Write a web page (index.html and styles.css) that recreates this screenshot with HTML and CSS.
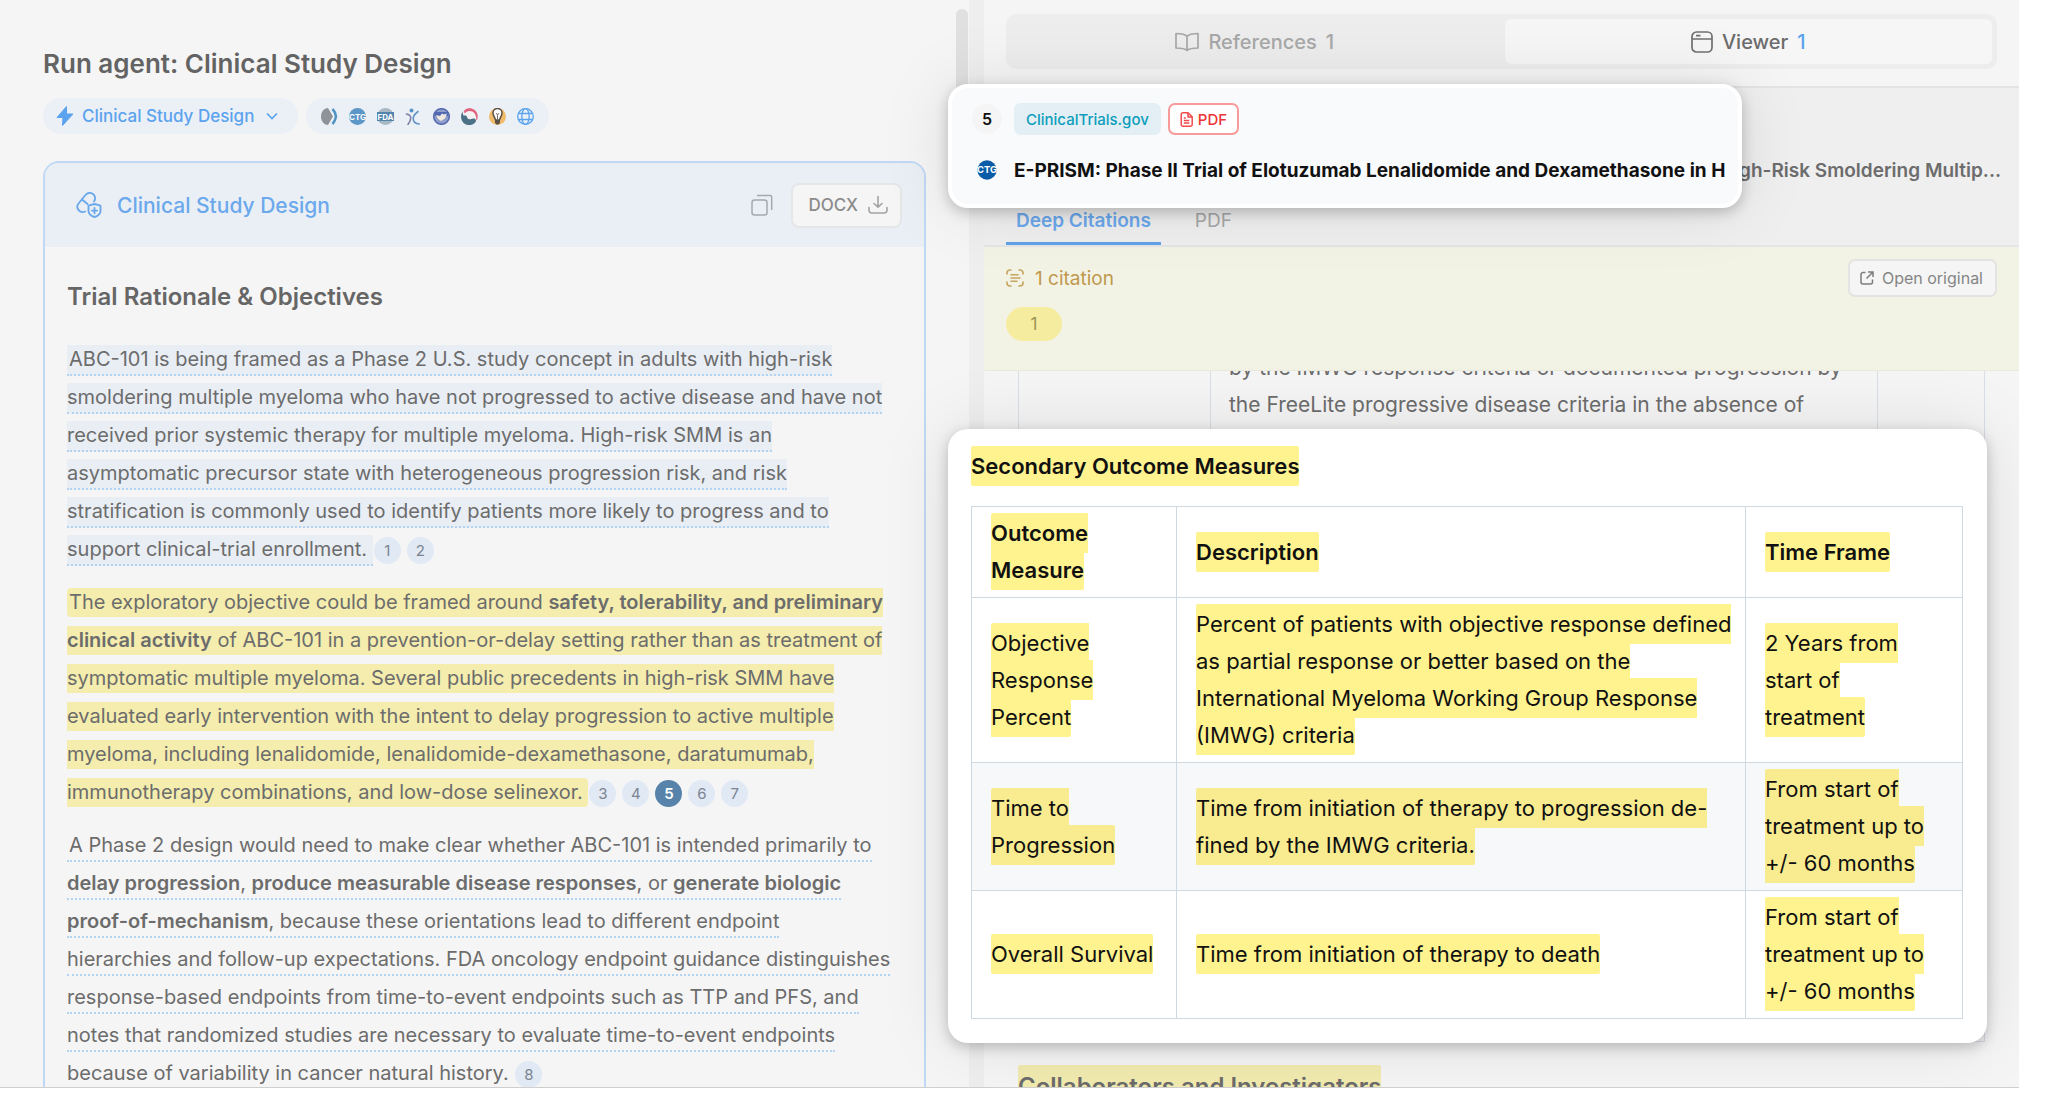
FILE: index.html
```html
<!DOCTYPE html>
<html lang="en">
  <head>
    <meta charset="UTF-8" />
    <meta name="viewport" content="width=device-width, initial-scale=1.0" />
    <title>Clinical Study Design</title>
    <link rel="stylesheet" href="styles.css">
  </head>
  <body>
    <div class="app">
      <main class="agent">
        <div class="scrollbar"></div>
        <h1>Run agent: Clinical Study Design</h1>
        <div class="pills">
          <button class="pill pill-agent">
            <svg width="18" height="20" viewBox="0 0 18 20"><path d="M10.5 0.5 1 11.5h6L6.500 19.500 17 8h-6.500z" fill="#5ba3ee" stroke="#5ba3ee" stroke-linejoin="round"/></svg>
            Clinical Study Design
            <svg class="chevron" width="12" height="8" viewBox="0 0 12 8"><path d="M1 1.500l5 5 5-5" fill="none" stroke="#5ba3ee" stroke-width="1.700"/></svg>
          </button>
          <div class="pill pill-sources">
            <svg width="17" height="17" viewBox="0 0 17 17"><path d="M7 0C3 0 0 4 0 8.500S3 17 7 17l5-8.500z" fill="#8f9399"/><path d="M11.500 1c1.500 1.500 3 4.500 3.500 7.500-.5 3-2 6-3.500 7.500" fill="none" stroke="#4f94c4" stroke-width="2.500"/></svg>
            <svg width="17" height="17" viewBox="0 0 17 17"><circle cx="8.500" cy="8.500" r="8.500" fill="#5c97c7"/><text x="8.500" y="11.500" class="logo-text">CTG</text></svg>
            <svg width="17" height="17" viewBox="0 0 17 17"><circle cx="8.500" cy="8.500" r="8.500" fill="#a9b9c4"/><path d="M0 4h17v9H0z" fill="#5384ad"/><text x="8.500" y="11.500" class="logo-text">FDA</text></svg>
            <svg width="17" height="17" viewBox="0 0 17 17" fill="none" stroke-linecap="round"><circle cx="6.500" cy="2.500" r="2" fill="#5594c9"/><path d="M1.500 6c3 .5 4 1.500 4.200 3.500S4.500 14.500 3 16.500" stroke="#7e7fa5" stroke-width="1.600"/><path d="M13 3.500C11 5 8.200 7.500 8.200 10.500s2.300 5.200 6 5.500" stroke="#5f93c6" stroke-width="1.600"/></svg>
            <svg width="17" height="17" viewBox="0 0 17 17"><circle cx="8.500" cy="8.500" r="7.800" fill="#8f9fca" stroke="#5469b0" stroke-width="1.500"/><path d="M2 4h13v4H2z" fill="#5168b3"/><path d="M3 7l4 1 2-2.500 2 1 3-1-2 5-4 2.500-3-2z" fill="#eee8df"/></svg>
            <svg width="17" height="17" viewBox="0 0 17 17"><circle cx="8.500" cy="8.500" r="8" fill="#f4f2f4"/><path d="M2.500 3A8.200 8.200 0 0 0 14 14.800c1.500-1.500 1.300-4-1-4.300-3-.4-3.500 1.500-5.500.5S6.500 7 4 7.500 1.500 5 2.500 3z" fill="#4c7187"/><path d="M3.500 2.200C8-1.500 15 .5 16.500 6.500c.7 3-.2 5-1.200 6.300.5-6-2.300-9.800-6.800-9.800C6 3 5 4 3.800 5.500 3 4.500 2.800 3 3.500 2.200z" fill="#e0637d"/></svg>
            <svg width="17" height="17" viewBox="0 0 17 17"><circle cx="8.500" cy="8.500" r="8.500" fill="#f0bc6b"/><path d="M6.500 12C6 9 4 8 4 5a4.500 4.500 0 0 1 9 0c0 3-2 4-2.500 7z" fill="#fff" stroke="#5b5147" stroke-width="1.500"/><path d="M7 5l1.500 2L10 5M8.500 7v4" stroke="#5b5147" fill="none" stroke-width=".8"/><path d="M6 12h5v3l-1.500 1.500h-2L6 15z" fill="#5b5147"/></svg>
            <svg width="17" height="17" viewBox="0 0 17 17" fill="none" stroke="#5ba3ee" stroke-width="1.300"><circle cx="8.500" cy="8.500" r="7.800"/><ellipse cx="8.500" cy="8.500" rx="3.700" ry="7.800"/><path d="M1.500 5.500h14M1.500 11.500h14"/></svg>
          </div>
        </div>

        <section class="report">
          <header class="report-head">
            <svg width="26" height="26" viewBox="0 0 26 26" fill="none" stroke="#6ba8ec" stroke-width="1.900" stroke-linecap="round" stroke-linejoin="round"><path d="M9 19.500A5.300 5.300 0 0 1 2.500 11.500L9.500 3A5.300 5.300 0 0 1 18 9.500"/><path d="M6 7.500l5.500 4.500"/><path d="M18.500 12l6 1.700v5c0 3-3 5.300-6 6.300-3-1-6-3.300-6-6.300v-5z"/><path d="M18.500 16v5.200M15.900 18.600h5.200"/></svg>
            <h2>Clinical Study Design</h2>
            <button class="icon-btn" aria-label="Copy">
              <svg width="22" height="22" viewBox="0 0 22 22" fill="none" stroke="#a5a9ae" stroke-width="1.500"><rect x="1" y="6" width="15" height="15" rx="2.500"/><path d="M6 1.500h13.200a1.500 1.500 0 0 1 1.500 1.500V16"/></svg>
            </button>
            <button class="docx-btn">DOCX
              <svg width="20" height="20" viewBox="0 0 20 20" fill="none" stroke="#a3a3a3" stroke-width="1.600" stroke-linecap="round" stroke-linejoin="round"><path d="M10 1.500v10.500M6 8.500l4 3.700 4-3.700M1 12.500V15a3 3 0 0 0 3 3h12a3 3 0 0 0 3-3v-2.500"/></svg>
            </button>
          </header>
          <div class="report-body">
            <h3>Trial Rationale &amp; Objectives</h3>
            <p><span class="cite cite-blue">ABC-101 is being framed as a Phase 2 U.S. study concept in adults with high-risk<br>smoldering multiple myeloma who have not progressed to active disease and have not<br>received prior systemic therapy for multiple myeloma. High-risk SMM is an<br>asymptomatic precursor state with heterogeneous progression risk, and risk<br>stratification is commonly used to identify patients more likely to progress and to<br>support clinical-trial enrollment. </span><span class="refs"><a href="#ref-1">1</a><a href="#ref-2">2</a></span></p>
            <p><span class="cite cite-active">The exploratory objective could be framed around <strong>safety, tolerability, and preliminary<br>clinical activity</strong> of ABC-101 in a prevention-or-delay setting rather than as treatment of<br>symptomatic multiple myeloma. Several public precedents in high-risk SMM have<br>evaluated early intervention with the intent to delay progression to active multiple<br>myeloma, including lenalidomide, lenalidomide-dexamethasone, daratumumab,<br>immunotherapy combinations, and low-dose selinexor. </span><span class="refs"><a href="#ref-3">3</a><a href="#ref-4">4</a><a href="#ref-5" class="current">5</a><a href="#ref-6">6</a><a href="#ref-7">7</a></span></p>
            <p><span class="cite">A Phase 2 design would need to make clear whether ABC-101 is intended primarily to<br><strong>delay progression</strong>, <strong>produce measurable disease responses</strong>, or <strong>generate biologic<br>proof-of-mechanism</strong>, because these orientations lead to different endpoint<br>hierarchies and follow-up expectations. FDA oncology endpoint guidance distinguishes<br>response-based endpoints from time-to-event endpoints such as TTP and PFS, and<br>notes that randomized studies are necessary to evaluate time-to-event endpoints<br>because of variability in cancer natural history. </span><span class="refs"><a href="#ref-8">8</a></span></p>
          </div>
        </section>
      </main>

      <div class="divider"></div>

      <aside class="viewer">
        <nav class="switch">
          <div class="switch-track">
            <button class="switch-btn">
              <svg width="24" height="20" viewBox="0 0 24 20" fill="none" stroke="#a8a8a8" stroke-width="1.700" stroke-linejoin="round"><path d="M12 4.500C10 2 6 1.500 1 1.500v14.500c5 0 9 .5 11 2.500 2-2 6-2.500 11-2.500V1.500c-5 0-9 .5-11 3zM12 4.500v14"/></svg>
              References <span>1</span>
            </button>
            <button class="switch-btn active">
              <svg width="22" height="22" viewBox="0 0 22 22" fill="none" stroke="#707070" stroke-width="1.700"><rect x="1" y="1" width="20" height="20" rx="4.500"/><path d="M1 8h20M5 4.700h4.500"/></svg>
              Viewer <span>1</span>
            </button>
          </div>
        </nav>

        <header class="source-head">
          <p class="source-title">gh-Risk Smoldering Multip...</p>
          <div class="tabs">
            <button class="tab active">Deep Citations</button>
            <button class="tab">PDF</button>
          </div>
        </header>

        <div class="citations">
          <div class="citations-row">
            <svg width="18" height="18" viewBox="0 0 18 18" fill="none" stroke="#c6a561" stroke-width="1.600" stroke-linecap="round"><path d="M1 5V4a3 3 0 0 1 3-3h1M13 1h1a3 3 0 0 1 3 3v1M17 13v1a3 3 0 0 1-3 3h-1M5 17H4a3 3 0 0 1-3-3v-1M5 5.700h7M5 9h9M5 12.300h6"/></svg>
            <span>1 citation</span>
            <button class="open-btn">
              <svg width="14" height="14" viewBox="0 0 14 14" fill="none" stroke="#7c7c7c" stroke-width="1.500"><path d="M5.500 1.500H3A2 2 0 0 0 1 3.500V11a2 2 0 0 0 2 2h7.500a2 2 0 0 0 2-2V8.500M8 1h5v5M13 1 6.500 7.500"/></svg>
              Open original
            </button>
          </div>
          <button class="chip">1</button>
        </div>

        <div class="doc">
          <div class="doc-table">
            <div></div>
            <div class="doc-cell">
              <p>by the IMWG response criteria or documented progression by<br>the FreeLite progressive disease criteria in the absence of</p>
            </div>
            <div></div>
          </div>
          <h4 class="doc-heading"><mark>Collaborators and Investigators</mark></h4>
        </div>

        <div class="callout source-card">
          <span class="num">5</span>
          <div class="tags">
            <span class="tag">ClinicalTrials.gov</span>
            <a class="tag tag-pdf" href="#pdf">
              <svg width="13" height="15" viewBox="0 0 13 15" fill="none" stroke="#f04a4a" stroke-width="1.500" stroke-linejoin="round"><path d="M3 .8h5l4.200 4V12.500a1.700 1.700 0 0 1-1.700 1.700H3A1.700 1.700 0 0 1 1.200 12.500v-10A1.700 1.700 0 0 1 3 .8zM8 1v4h4M3.800 6h2M3.800 8.500h5.500M3.800 11h5.500"/></svg>
              PDF
            </a>
          </div>
          <svg class="ctg" width="20" height="20" viewBox="0 0 17 17"><circle cx="8.500" cy="8.500" r="8.200" fill="#0a5ca6"/><text x="8.500" y="11.200" class="logo-text">CTG</text></svg>
          <strong class="card-title">E-PRISM: Phase II Trial of Elotuzumab Lenalidomide and Dexamethasone in H</strong>
        </div>

        <div class="callout outcome-card">
          <h4><mark>Secondary Outcome Measures</mark></h4>
          <table>
            <colgroup><col class="col-measure"><col><col class="col-time"></colgroup>
            <thead>
              <tr>
                <th><mark>Outcome<br>Measure</mark></th>
                <th><mark>Description</mark></th>
                <th><mark>Time Frame</mark></th>
              </tr>
            </thead>
            <tbody>
              <tr>
                <td><mark>Objective<br>Response<br>Percent</mark></td>
                <td><mark>Percent of patients with objective response defined<br>as partial response or better based on the<br>International Myeloma Working Group Response<br>(IMWG) criteria</mark></td>
                <td><mark>2 Years from<br>start of<br>treatment</mark></td>
              </tr>
              <tr>
                <td><mark>Time to<br>Progression</mark></td>
                <td><mark>Time from initiation of therapy to progression de-<br>fined by the IMWG criteria.</mark></td>
                <td><mark>From start of<br>treatment up to<br>+/- 60 months</mark></td>
              </tr>
              <tr>
                <td><mark>Overall Survival</mark></td>
                <td><mark>Time from initiation of therapy to death</mark></td>
                <td><mark>From start of<br>treatment up to<br>+/- 60 months</mark></td>
              </tr>
            </tbody>
          </table>
        </div>
      </aside>
    </div>
  </body>
</html>
```

FILE: styles.css
```css
* {
  box-sizing: border-box;
}
body {
  margin: 0;
  height: 100vh;
  padding: 0 29px 17px 0;
  background: #fff;
  font-family: Inter, "Liberation Sans", sans-serif;
  font-size: 22px;
  color: #6c6c6c;
}
button {
  font: inherit;
  color: inherit;
  border: 0;
  padding: 0;
  background: none;
  cursor: pointer;
}
a {
  text-decoration: none;
}
svg {
  flex: none;
}
h1, h2, h3, h4, p {
  margin: 0;
}
.app {
  display: grid;
  grid-template-columns: minmax(0, 969fr) 15px minmax(0, 1035fr);
  height: 100%;
  overflow: hidden;
  background: #f5f5f5;
  border-bottom: 1px solid #cfcfcf;
}

/* left side */
.agent {
  position: relative;
  padding: 44px 43px 0;
  overflow: hidden;
}
.scrollbar {
  position: absolute;
  top: 9px;
  right: 1px;
  width: 12px;
  height: 160px;
  border-radius: 6px;
  background: #e0e0e0;
}
h1 {
  font-size: 26px;
  line-height: 40px;
  font-weight: 600;
  color: #636363;
}
.pills {
  display: flex;
  gap: 8px;
  margin: 14px 0 27px;
}
.pill {
  display: flex;
  align-items: center;
  height: 36px;
  padding: 0 15px;
  border-radius: 18px;
  background: #ebf0f6;
}
.pill-agent {
  gap: 8px;
  padding: 0 20px 0 13px;
  font-size: 17px;
  font-weight: 500;
  color: #5ba3ee;
}
.chevron {
  margin-left: 4px;
}
.pill-sources {
  gap: 11px;
}
.logo-text {
  font-size: 8px;
  font-weight: 700;
  fill: #fff;
  text-anchor: middle;
}
.report {
  border: 2px solid #bfd8f3;
  border-radius: 16px;
  overflow: hidden;
}
.report-head {
  display: flex;
  align-items: center;
  height: 84px;
  padding: 0 22px 0 31px;
  background: #eaeff6;
}
.report-head h2 {
  margin: 0 auto 0 15px;
  font-size: 21px;
  font-weight: 500;
  color: #6ba8ec;
}
.icon-btn {
  display: flex;
  margin-right: 18px;
}
.docx-btn {
  display: flex;
  align-items: center;
  gap: 10px;
  height: 45px;
  padding: 0 12px 0 15px;
  border: 2px solid #e4e6e8;
  border-radius: 8px;
  background: #f5f5f5;
  font-size: 17px;
  font-weight: 500;
  color: #8b8b8b;
}
.report-body {
  padding: 30px 22px 0;
  white-space: nowrap;
}
h3 {
  margin-bottom: 23px;
  font-size: 24px;
  line-height: 40px;
  font-weight: 600;
  color: #666;
}
.report-body p {
  margin-bottom: 15px;
  font-size: 20px;
  line-height: 38px;
}
.report-body strong {
  font-weight: 600;
}
.cite {
  padding: 2px 0 3px 2px;
  border-bottom: 2px dotted #b3d3f2;
}
.cite-blue {
  background: #e9eef5;
}
.cite-active {
  border-bottom: 0;
  border-radius: 4px;
  background: #f4edae;
}
.refs {
  display: inline-flex;
  gap: 6px;
  margin-left: 1px;
  vertical-align: middle;
}
.refs a {
  width: 27px;
  height: 27px;
  border-radius: 50%;
  background: #e0e9f4;
  font-size: 15px;
  line-height: 27px;
  text-align: center;
  color: #7b8490;
}
.refs .current {
  background: #5783ab;
  font-weight: 600;
  color: #fff;
}

/* right side */
.divider {
  background: #eeeeee;
}
.viewer {
  position: relative;
  display: flex;
  flex-direction: column;
}
.switch {
  padding: 14px 22px 17px;
  border-bottom: 2px solid #e4e4e4;
}
.switch-track {
  display: grid;
  grid-template-columns: 1fr 1fr;
  gap: 6px;
  height: 55px;
  padding: 5px;
  border-radius: 10px;
  background: #ededed;
}
.switch-btn {
  display: flex;
  align-items: center;
  justify-content: center;
  gap: 9px;
  font-size: 20px;
  font-weight: 500;
  color: #a8a8a8;
}
.switch-btn.active {
  border-radius: 6px;
  background: #f6f6f6;
  color: #6c6c6c;
}
.switch-btn.active span {
  color: #5ba3ee;
}
.source-head {
  padding: 67px 18px 0 22px;
  background: #efefef;
  border-bottom: 2px solid #e3e5e6;
}
.source-title {
  font-size: 19px;
  line-height: 32px;
  font-weight: 600;
  text-align: right;
}
.tabs {
  display: flex;
  gap: 24px;
  margin-top: 18px;
}
.tab {
  height: 40px;
  padding: 0 10px 6px;
  border-bottom: 3px solid transparent;
  font-size: 19px;
  color: #a8a8a8;
}
.tab.active {
  border-bottom-color: #62a2ea;
  font-weight: 600;
  color: #6ba8ec;
}
.citations {
  height: 124px;
  padding: 12px 22px 0;
  background: #f2f3e4;
  border-bottom: 1px solid #e9eadb;
}
.citations-row {
  display: flex;
  align-items: center;
  gap: 11px;
  font-size: 19px;
  color: #c0994e;
}
.open-btn {
  display: flex;
  align-items: center;
  gap: 8px;
  height: 38px;
  margin-left: auto;
  padding: 0 12px 0 10px;
  border: 2px solid #e3e4e2;
  border-radius: 7px;
  background: #f5f5f5;
  font-size: 16px;
  color: #858585;
}
.chip {
  width: 56px;
  height: 34px;
  margin-top: 10px;
  border-radius: 17px;
  background: #f5eca0;
  font-size: 17px;
  color: #9a9352;
}
.doc {
  display: flex;
  flex: 1;
  flex-direction: column;
  min-height: 0;
  padding: 0 34px;
  overflow: hidden;
  white-space: nowrap;
}
.doc-table {
  display: grid;
  flex: 1;
  grid-template-columns: 191px 1fr 107px;
  min-height: 0;
  border: 1px solid #d9dfe6;
  border-top: 0;
}
.doc-table > div + div {
  border-left: 1px solid #d9dfe6;
}
.doc-cell {
  padding: 0 18px;
  overflow: hidden;
}
.doc-cell p {
  margin-top: -22px;
  font-size: 21px;
  line-height: 37px;
}
.doc-heading {
  height: 45px;
  padding-top: 23px;
  font-size: 24px;
  line-height: 44px;
  overflow: hidden;
}
.doc-heading mark {
  background: #f2ebb0;
  color: #6c6c6c;
}

/* raised cards */
.callout {
  position: absolute;
  left: -36px;
  border-radius: 20px;
  box-shadow: 0 4px 14px rgba(0, 0, 0, 0.22), 0 0 70px rgba(0, 0, 0, 0.1);
  color: #111;
  white-space: nowrap;
}
.source-card {
  top: 84px;
  right: 277px;
  display: grid;
  grid-template-columns: 30px 1fr;
  gap: 21px 12px;
  align-items: center;
  height: 124px;
  padding: 14px 0 21px 20px;
  border: 4px solid #fff;
  background: #f9fafc;
}
.num {
  width: 30px;
  height: 30px;
  border-radius: 50%;
  background: #f5f5f6;
  font-size: 16px;
  line-height: 30px;
  font-weight: 600;
  text-align: center;
}
.ctg {
  justify-self: center;
}
.tags {
  display: flex;
  gap: 7px;
}
.tag {
  display: flex;
  align-items: center;
  height: 32px;
  padding: 0 12px;
  border-radius: 7px;
  background: #e3eff4;
  font-size: 15px;
  font-weight: 500;
  color: #0d9dbd;
}
.tag-pdf {
  gap: 5px;
  border: 2px solid #f79a9a;
  padding: 0 10px;
  background: #fff;
  color: #ec3535;
}
.card-title {
  font-size: 19px;
  font-weight: 700;
}
.outcome-card {
  top: 429px;
  right: 32px;
  padding: 18px 24px 24px 23px;
  background: #fff;
}
h4, th {
  font-size: 22px;
  font-weight: 600;
}
.outcome-card h4 {
  margin-bottom: 21px;
  line-height: 38px;
}
mark {
  padding: 7px 0;
  border-radius: 2px;
  background: #fff38f;
  color: #111;
}
table {
  width: 100%;
  border-collapse: collapse;
  table-layout: fixed;
  line-height: 37px;
}
.col-measure {
  width: 205px;
}
.col-time {
  width: 217px;
}
th, td {
  padding: 8px 0 8px 19px;
  border: 1px solid #cfd9e1;
  text-align: left;
}
tbody tr:nth-child(even) {
  background: #f6f8fa;
}
tbody tr:nth-child(even) mark {
  background: #f9ec90;
}
```
